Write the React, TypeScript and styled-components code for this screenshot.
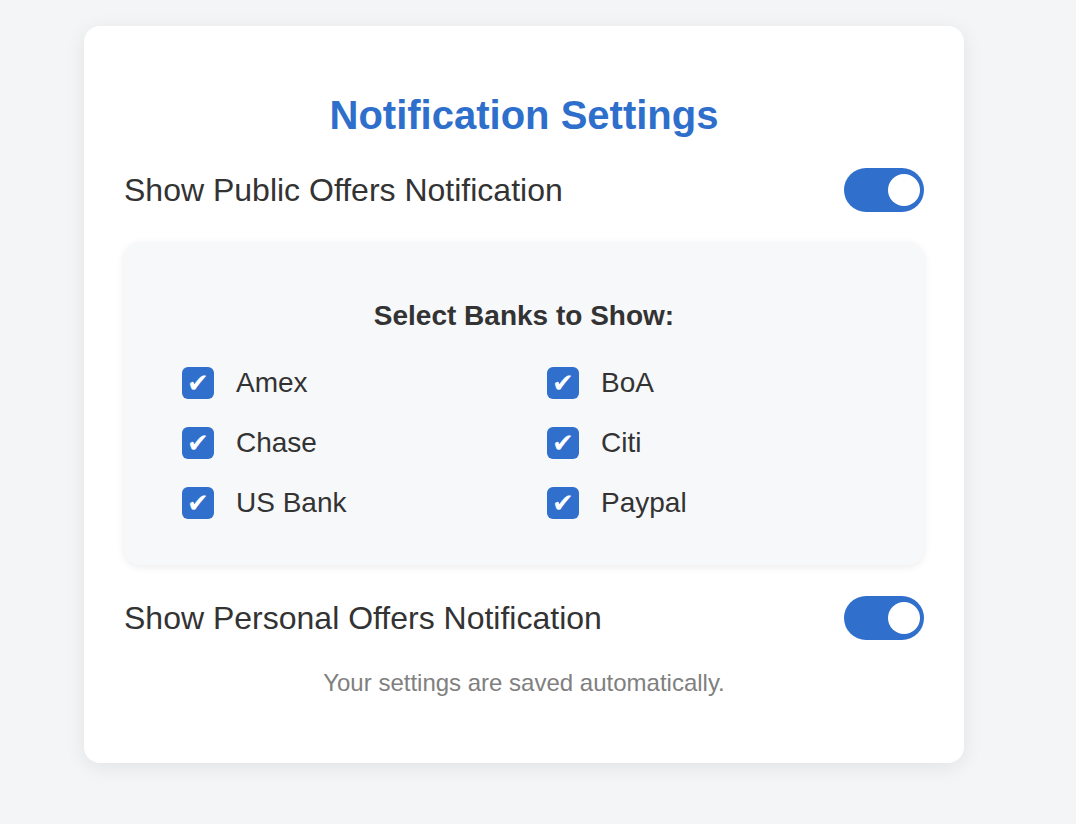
import styled, { createGlobalStyle } from 'styled-components';
import { useState } from 'react';

const GlobalStyle = createGlobalStyle`
  html, body {
    margin: 0;
    padding: 0;
    background-color: #f4f5f7;
    font-family: "Liberation Sans", Arial, Helvetica, sans-serif;
    color: #333333;
  }
`;

const Page = styled.div`
  min-height: 824px;
  box-sizing: border-box;
  padding: 26px 0 0 84px;
`;

const Card = styled.div`
  width: 880px;
  box-sizing: border-box;
  background-color: #ffffff;
  border-radius: 16px;
  box-shadow: 0 4px 20px rgba(0, 0, 0, 0.08);
  padding: 66px 40px 66px;
  display: flex;
  flex-direction: column;
`;

const Title = styled.h2`
  margin: 0 0 30px;
  text-align: center;
  font-size: 40px;
  line-height: 46px;
  font-weight: 700;
  color: #2f6fcc;
`;

const SettingRow = styled.div`
  display: flex;
  align-items: center;
  justify-content: space-between;
  height: 44px;
`;

const RowLabel = styled.span`
  font-size: 32px;
  color: #333333;
`;

const Track = styled.button<{ $on: boolean }>`
  position: relative;
  width: 80px;
  height: 44px;
  border: 0;
  padding: 0;
  border-radius: 22px;
  cursor: pointer;
  background-color: ${(p) => (p.$on ? '#3070cc' : '#cccccc')};
  transition: background-color 0.2s;

  &::after {
    content: '';
    position: absolute;
    top: 6px;
    left: ${(p) => (p.$on ? '44px' : '4px')};
    width: 32px;
    height: 32px;
    border-radius: 50%;
    background-color: #ffffff;
    transition: left 0.2s;
  }
`;

const BankPanel = styled.div`
  margin: 30px 0 31px;
  background-color: #f7f8fa;
  border-radius: 16px;
  box-shadow: 0 2px 8px rgba(0, 0, 0, 0.08);
  padding: 58px 40px 46px;
`;

const PanelTitle = styled.h3`
  margin: 0 0 35px;
  text-align: center;
  font-size: 28px;
  line-height: 32px;
  font-weight: 700;
  color: #333333;
`;

const BankGrid = styled.div`
  display: grid;
  grid-template-columns: 365px 1fr;
  row-gap: 28px;
  padding-left: 18px;
`;

const BankItem = styled.label`
  display: flex;
  align-items: center;
  gap: 22px;
  height: 32px;
  font-size: 28px;
  color: #333333;
  cursor: pointer;
`;

const CheckBox = styled.span<{ $checked: boolean }>`
  width: 32px;
  height: 32px;
  box-sizing: border-box;
  border-radius: 6px;
  display: flex;
  align-items: center;
  justify-content: center;
  background-color: ${(p) => (p.$checked ? '#3070cc' : '#ffffff')};
  border: ${(p) => (p.$checked ? '0' : '2px solid #bbbbbb')};
  color: #ffffff;
  font-family: "DejaVu Sans", sans-serif;
  font-size: 26px;
  line-height: 1;
`;

const Footnote = styled.p`
  margin: 29px 0 0;
  text-align: center;
  font-size: 24px;
  line-height: 28px;
  color: #808080;
`;

const BANKS = ['Amex', 'BoA', 'Chase', 'Citi', 'US Bank', 'Paypal'];

function Toggle({ on, onChange }: { on: boolean; onChange: (v: boolean) => void }) {
  return <Track $on={on} onClick={() => onChange(!on)} aria-pressed={on} />;
}

export default function App() {
  const [publicOn, setPublicOn] = useState(true);
  const [personalOn, setPersonalOn] = useState(true);
  const [selected, setSelected] = useState<Record<string, boolean>>(
    Object.fromEntries(BANKS.map((b) => [b, true])),
  );

  return (
    <Page>
      <GlobalStyle />
      <Card>
        <Title>Notification Settings</Title>
        <SettingRow>
          <RowLabel>Show Public Offers Notification</RowLabel>
          <Toggle on={publicOn} onChange={setPublicOn} />
        </SettingRow>
        <BankPanel>
          <PanelTitle>Select Banks to Show:</PanelTitle>
          <BankGrid>
            {BANKS.map((bank) => (
              <BankItem
                key={bank}
                onClick={() => setSelected((s) => ({ ...s, [bank]: !s[bank] }))}
              >
                <CheckBox $checked={selected[bank]}>{selected[bank] ? '✔' : ''}</CheckBox>
                {bank}
              </BankItem>
            ))}
          </BankGrid>
        </BankPanel>
        <SettingRow>
          <RowLabel>Show Personal Offers Notification</RowLabel>
          <Toggle on={personalOn} onChange={setPersonalOn} />
        </SettingRow>
        <Footnote>Your settings are saved automatically.</Footnote>
      </Card>
    </Page>
  );
}
